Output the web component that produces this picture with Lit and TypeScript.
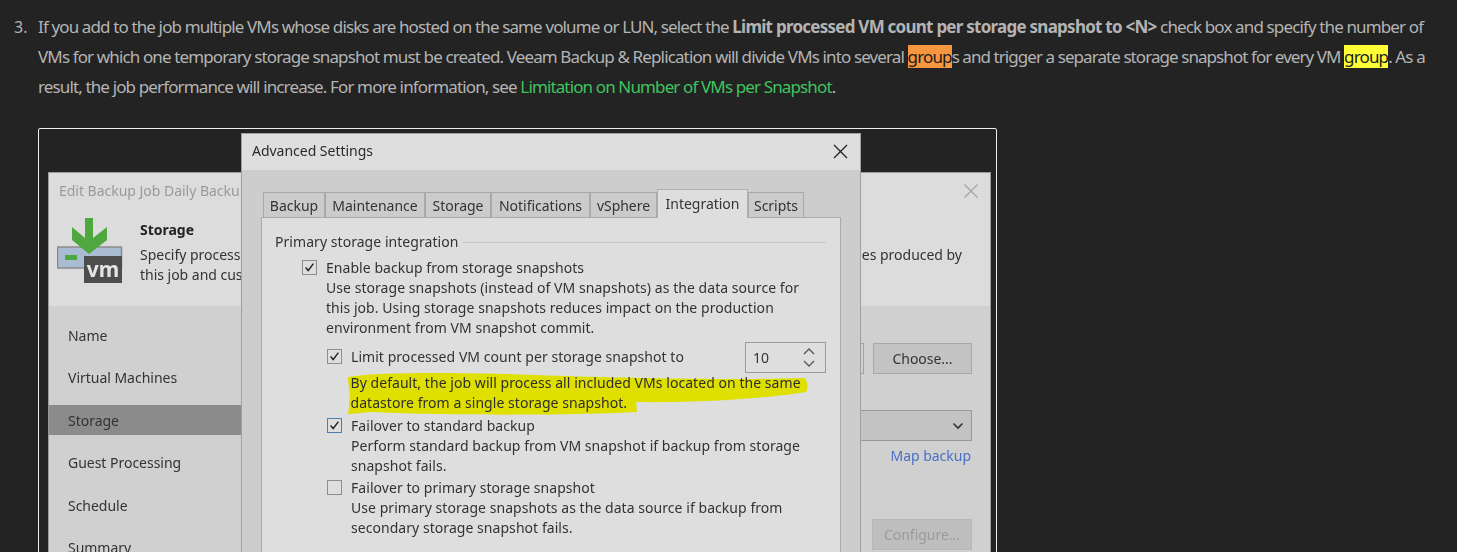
import { LitElement, html, css, svg } from "lit";
import { customElement } from "lit/decorators.js";

const TABS = [
  ["Backup", 62],
  ["Maintenance", 100],
  ["Storage", 66],
  ["Notifications", 99],
  ["vSphere", 67],
  ["Integration", 91],
  ["Scripts", 56],
] as const;
const NAV = ["Name", "Virtual Machines", "Storage", "Guest Processing", "Schedule", "Summary"];

const check = svg`<svg class="tick" viewBox="0 0 15 15" width="13" height="13"><path d="M3 7.5 L6 11 L12 3" fill="none" stroke="#222" stroke-width="1.6"/></svg>`;

@customElement("app-root")
export class AppRoot extends LitElement {
  static styles = css`
    :host { display: block; height: 552px; overflow: hidden; background: #232323; font-family: "Noto Sans", sans-serif; }
    .item { display: flex; padding: 12px 0 0 14px; height: 90px; font-size: 17px; line-height: 30px; color: #b4b4b4; letter-spacing: -0.87px; }
    .num { width: 24px; flex: none; letter-spacing: 0; font-size: 16px; }
    .item b { font-weight: 700; letter-spacing: -0.75px; }
    .item a { color: #3fc35e; }
    .tight { letter-spacing: -0.93px; }
    .or { background: #f6963e; color: #1c1c1c; }
    .ye { background: #ffff36; color: #1c1c1c; }
    .frame { position: relative; margin: 26px 0 0 38px; width: 957px; height: 500px; border: 1px solid #eee; border-radius: 2px 2px 0 0; overflow: hidden; font-size: 14px; line-height: 20px; color: #333; letter-spacing: -0.02px; }
    .shots { filter: blur(0.4px); }

    .win { position: absolute; left: 9px; top: 43px; width: 943px; height: 460px; background: #dcdcdc; border: 1px solid #9a9a9a; box-sizing: border-box; }
    .win-title { padding: 8px 10px 0; height: 30px; color: #9a9a9a; box-sizing: border-box; }
    .win-x { position: absolute; right: 11px; top: 10px; }
    .head { display: flex; height: 103px; padding-top: 14px; padding-left: 8px; box-sizing: border-box; }
    .head svg { flex: none; margin-top: 1px; }
    .head-text { flex: 1; margin-left: 17px; padding-right: 28px; padding-top: 4px; }
    .head-text strong { display: block; font-weight: 700; color: #222; height: 25px; margin-top: -1px; }
    .line { display: flex; justify-content: space-between; }
    .win-body { display: flex; height: 330px; }
    .nav { width: 192px; flex: none; background: #d0d0d0; padding-top: 8.5px; box-sizing: border-box; }
    .nav div { height: 42.5px; padding: 11px 19px 0; box-sizing: border-box; position: relative; }
    .nav .on { background: #8b8b8b; height: 30px; padding-top: 6px; margin: 5.5px 0 7px; }
    .content { flex: 1; background: #d0d0d0; padding: 37px 18px 0 0; box-sizing: border-box; display: flex; flex-direction: column; }
    .row { display: flex; gap: 9px; }
    .input { flex: 1; height: 31px; border: 1px solid #a3a3a3; box-sizing: border-box; }
    .btn { width: 99px; height: 31px; background: #c3c3c3; border: 1px solid #a8a8a8; box-sizing: border-box; text-align: center; line-height: 29px; }
    .select { margin-top: 36px; height: 31px; background: #c3c3c3; border: 1px solid #999; box-sizing: border-box; display: flex; justify-content: flex-end; align-items: center; padding-right: 7px; }
    .map { margin-top: 5px; text-align: right; color: #4a6fc4; padding-right: 1px; }
    .cfg { margin: 53px 0 0 auto; width: 100px; color: #9b9b9b; background: #bebebe; border-color: #b8b8b8; }

    .dlg { position: absolute; left: 202px; top: 4px; width: 620px; height: 480px; background: #cdcdcd; border: 1px solid #a0a0a0; box-sizing: border-box; }
    .dlg-title { height: 36px; background: #dedede; display: flex; justify-content: space-between; align-items: center; padding: 0 12px 2px 10px; box-sizing: border-box; color: #2b2b2b; }
    .tabs { display: flex; height: 28px; margin: 19px 0 0 21px; align-items: flex-end; }
    .tab { height: 25px; box-sizing: border-box; border: 1px solid #a9a9a9; border-bottom: 0; background: #cbcbcb; text-align: center; line-height: 25px; }
    .tab.active { height: 29px; background: #dedede; border-color: #b0b0b0; line-height: 27px; margin-bottom: -1px; position: relative; z-index: 1; }
    .panel { position: relative; margin: 0 19px 0 19px; height: 400px; background: #dedede; border: 1px solid #ababab; padding: 14px 14px 0 13px; box-sizing: border-box; letter-spacing: 0.05px; }
    .legend { display: flex; align-items: center; gap: 5px; position: relative; }
    .legend i { flex: 1; height: 1px; background: #c6c6c6; }
    .opt { display: flex; gap: 9px; margin-left: 27px; position: relative; }
    .opt.sub { margin-left: 52px; }
    .cb { flex: none; width: 15px; height: 15px; margin-top: 2px; border: 1px solid #8d8d8d; box-sizing: border-box; display: flex; align-items: center; justify-content: center; }
    .cb.blue { border-color: #4a7eb0; }
    .tick { display: block; }
    .first { margin-top: 6px; }
    .limit { margin-top: 9px; }
    .grow { flex: 1; }
    .limit-row { display: flex; justify-content: space-between; position: relative; }
    .spin { position: absolute; right: 0; top: -5px; width: 81px; height: 31px; border: 1px solid #9a9a9a; box-sizing: border-box; display: flex; justify-content: space-between; align-items: center; padding: 0 10px 0 7px; background: #dedede; }
    .spin svg { display: block; }
    .hl-text { position: relative; margin-top: 6px; margin-left: -0.5px; }
    .hl { position: absolute; left: 84px; top: 152px; }
    .f1 { margin-top: 3px; }
    .f2 { margin-top: 2px; }
    .ink { color: #2e2e2e; }
  `;

  render() {
    return html`
      <div class="item">
        <span class="num">3.</span>
        <div>
          If you add to the job multiple VMs whose disks are hosted on the same volume or LUN, select the <b>Limit processed VM count per storage snapshot to &lt;N&gt;</b> check box and specify the number of<br />
          VMs for which one temporary storage snapshot must be created. Veeam Backup &amp; Replication will divide VMs into several <span class="or">group</span><span class="tight">s and trigger a separate storage snapshot for every VM </span><span class="ye">group</span>. As a<br />
          result, the job performance will increase. For more information, see <a>Limitation on Number of VMs per Snapshot</a>.
        </div>
      </div>
      <div class="frame">
        <div class="shots">
          ${this.back()} ${this.dialog()}
        </div>
      </div>
    `;
  }

  back() {
    return html`<div class="win">
      <div class="win-title">Edit Backup Job Daily Backup</div>
      <svg class="win-x" width="16" height="16" viewBox="0 0 16 16"><path d="M1.5 1.5 L14.5 14.5 M14.5 1.5 L1.5 14.5" stroke="#a3a3a3" stroke-width="1.2" /></svg>
      <div class="head">
        <svg width="66" height="66" viewBox="57 218 66 66">
          <rect x="57.5" y="247" width="64" height="21" fill="#a9bcd3" stroke="#8a8a8a" stroke-width="1.5" />
          <rect x="65" y="255" width="12" height="5" fill="#4ea83f" />
          <path d="M72 227 L72 240 L89 254 L107 240 L107 227 L93 238 L93 218 L85 218 L85 238 Z" fill="#4ea83f" />
          <rect x="84" y="256" width="38" height="27" fill="#4d4d4d" />
          <text x="103" y="277" text-anchor="middle" font-family="Noto Sans" font-weight="700" font-size="21" fill="#e4e4e4">vm</text>
        </svg>
        <div class="head-text">
          <strong>Storage</strong>
          <div class="line"><span>Specify processing</span><span>es produced by</span></div>
          <div>this job and customize</div>
        </div>
      </div>
      <div class="win-body">
        <div class="nav">${NAV.map((n) => html`<div class=${n === "Storage" ? "on" : ""}>${n}</div>`)}</div>
        <div class="content">
          <div class="row"><div class="input"></div><div class="btn">Choose...</div></div>
          <div class="select">
            <svg width="12" height="8" viewBox="0 0 12 8"><path d="M1.5 1.5 L6 6 L10.5 1.5" fill="none" stroke="#333" stroke-width="1.6" /></svg>
          </div>
          <div class="map">Map backup</div>
          <div class="btn cfg">Configure...</div>
        </div>
      </div>
    </div>`;
  }

  dialog() {
    return html`<div class="dlg">
      <div class="dlg-title">
        <span>Advanced Settings</span>
        <svg width="15" height="15" viewBox="0 0 15 15"><path d="M1 1 L14 14 M14 1 L1 14" stroke="#222" stroke-width="1.3" /></svg>
      </div>
      <div class="tabs">
        ${TABS.map(([t, w]) => html`<div class="tab ${t === "Integration" ? "active" : ""}" style="width:${w}px">${t}</div>`)}
      </div>
      <div class="panel">
        <svg class="hl" width="462" height="46" viewBox="346 368 462 46">
          <path d="M348 375 C 372 371 423 370 507 372 C 560 374 700 379 805 376 C 808 382 808 386 806 390 C 770 396 703 401 636 400 L 637 410 C 560 414 420 413 373 410 C 360 411 352 412 348 412 C 350 402 349 396 350 392 C 349 386 348 380 348 375 Z" fill="#dfdf00" />
        </svg>
        <div class="legend"><span>Primary storage integration</span><i></i></div>
        <div class="opt first">
          <div class="cb">${check}</div>
          <div>Enable backup from storage snapshots<br />Use storage snapshots (instead of VM snapshots) as the data source for<br />this job. Using storage snapshots reduces impact on the production<br />environment from VM snapshot commit.</div>
        </div>
        <div class="opt sub limit">
          <div class="cb">${check}</div>
          <div class="grow">
            <div class="limit-row">
              <span>Limit processed VM count per storage snapshot to</span>
              <div class="spin">
                <span>10</span>
                <span>
                  <svg width="12" height="9" viewBox="0 0 12 9"><path d="M1 7 L6 2 L11 7" fill="none" stroke="#555" stroke-width="1.3" /></svg>
                  <svg width="12" height="9" viewBox="0 0 12 9" style="margin-top:3px"><path d="M1 2 L6 7 L11 2" fill="none" stroke="#555" stroke-width="1.3" /></svg>
                </span>
              </div>
            </div>
            <div class="hl-text ink">By default, the job will process all included VMs located on the same<br />datastore from a single storage snapshot.</div>
          </div>
        </div>
        <div class="opt sub f1">
          <div class="cb blue">${check}</div>
          <div>Failover to standard backup<br />Perform standard backup from VM snapshot if backup from storage<br />snapshot fails.</div>
        </div>
        <div class="opt sub f2">
          <div class="cb"></div>
          <div>Failover to primary storage snapshot<br />Use primary storage snapshots as the data source if backup from<br />secondary storage snapshot fails.</div>
        </div>
      </div>
    </div>`;
  }
}
